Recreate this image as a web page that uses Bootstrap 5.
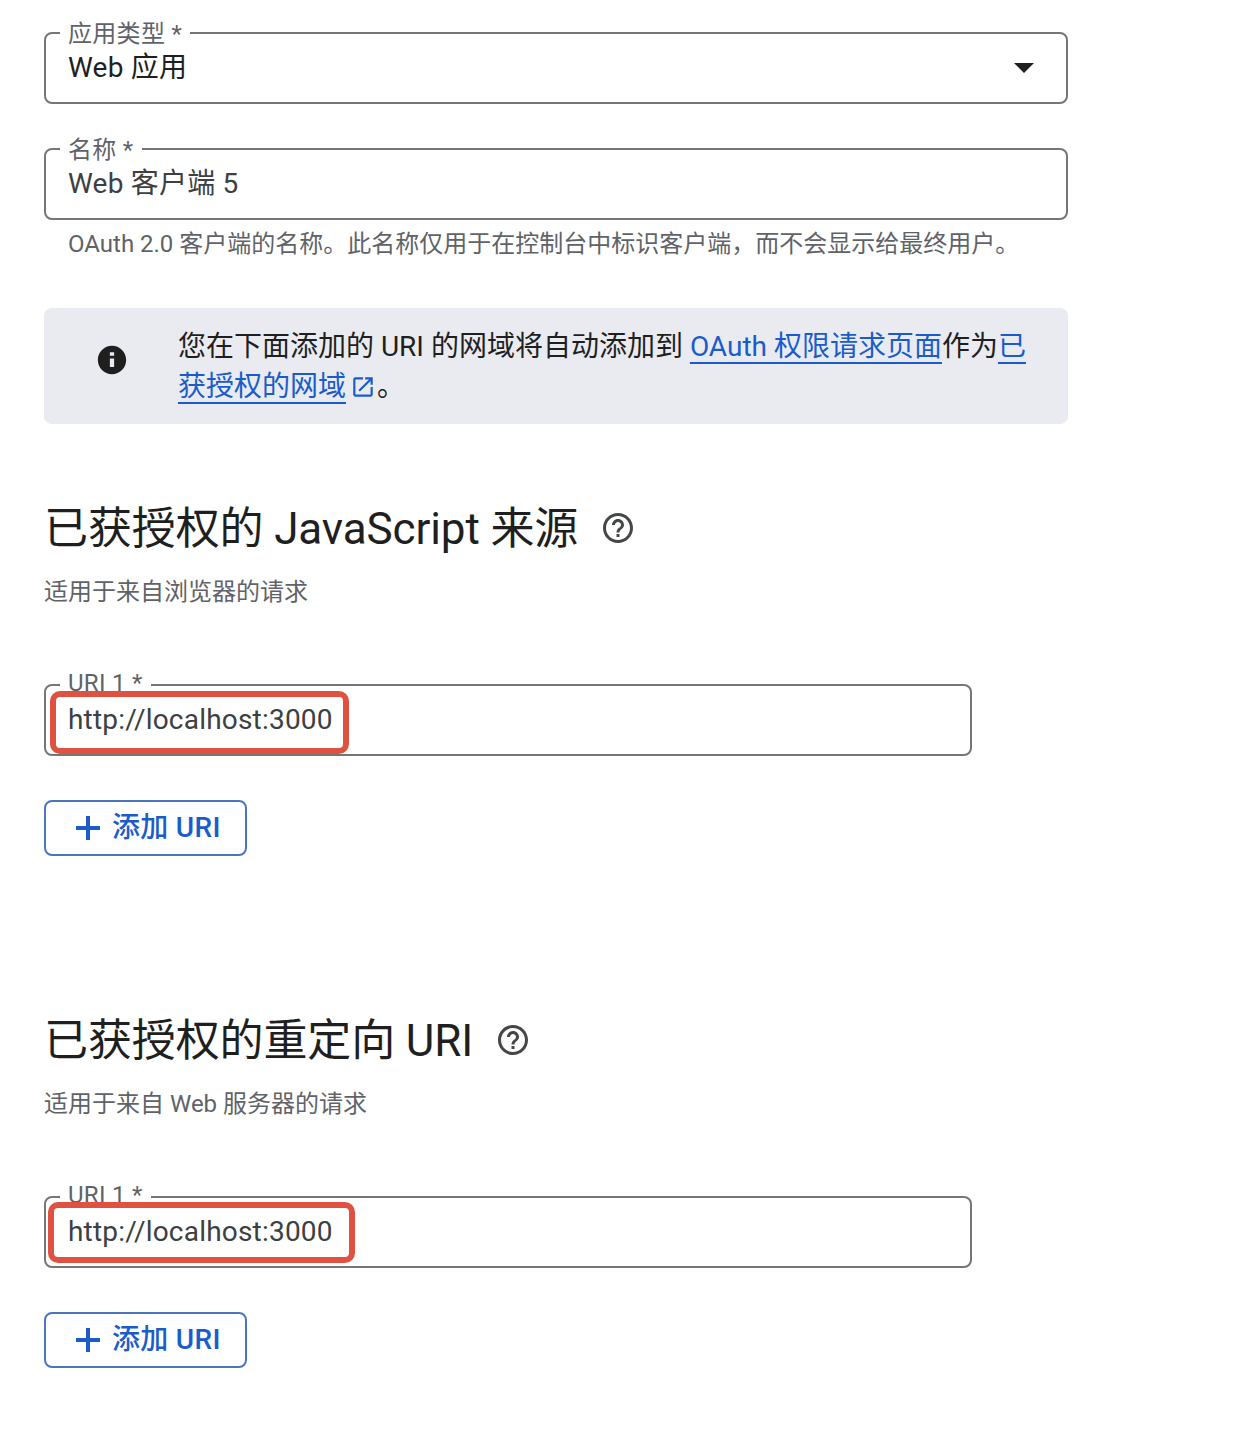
<!DOCTYPE html>
<html lang="zh-CN">
<head>
  <meta charset="UTF-8">
  <title>Web 客户端</title>
  <meta name="viewport" content="width=device-width, initial-scale=1">
  <link href="https://cdn.jsdelivr.net/npm/bootstrap@5.3.3/dist/css/bootstrap.min.css" rel="stylesheet">
  <style>
    body { font-family: Roboto, "Noto Sans CJK SC", sans-serif; color: #1f1f1f; background: #fff; }
    .page-wrap { width: 1024px; margin-left: 44px; padding-top: 32px; }
    .outline-field { position: relative; height: 72px; border: 2px solid #747775; border-radius: 8px; padding: 0 22px; font-size: 28px; line-height: 36px; letter-spacing: .2px; }
    .outline-field.short-field { width: 928px; margin-top: 76px; }
    .outline-label { position: absolute; left: 14px; top: -14px; padding: 0 8px; background: #fff; font-size: 24px; line-height: 28px; letter-spacing: .3px; color: #5f6368; }
    .short-field .outline-label { top: -17px; }
    .value-dark { color: #1f1f1f; }
    .value-soft { color: #3c4043; }
    .select-arrow { width: 0; height: 0; border-left: 10px solid transparent; border-right: 10px solid transparent; border-top: 10px solid #1f1f1f; margin-right: 10px; }
    .gap-field { margin-top: 44px; }
    .helper-text { margin: 12px 0 0 24px; font-size: 24px; line-height: 24px; color: #5f6368; white-space: nowrap; }
    .note-box { margin: 52px 0 0; height: 116px; padding: 19px 42px 17px 51px; border: 0; border-radius: 8px; background: #e9ebf1; color: #1f1f1f; font-size: 28px; line-height: 40px; }
    .note-box a { color: #1a5ccb; text-decoration: underline; text-decoration-thickness: 2px; text-underline-offset: 6px; }
    .note-text { margin-left: 49px; }
    .note-icon { flex: none; width: 34px; height: 34px; margin-top: 16px; fill: #1f1f1f; }
    .ext-icon { width: 26px; height: 26px; fill: #1a5ccb; vertical-align: -4px; margin-left: 4px; margin-right: 1px; }
    .sec-head { margin-top: 77px; }
    .sec-head.second-head { margin-top: 157px; }
    .sec-title { font-size: 44px; line-height: 56px; font-weight: 400; letter-spacing: -.12px; margin: 0; color: #1f1f1f; }
    .sec-sub { font-size: 24px; line-height: 32px; color: #5f6368; margin: 19px 0 0; }
    .help-icon { width: 36px; height: 36px; margin-top: -2px; fill: #444746; flex: none; }
    .red-mark { position: absolute; border: 6px solid #df5140; border-radius: 10px; pointer-events: none; }
    .red-one { left: 4px; top: 5px; width: 299px; height: 63px; }
    .red-two { left: 2px; top: 4px; width: 307px; height: 61px; }
    .add-btn { width: 203px; height: 56px; margin-top: 44px; padding: 0 0 0 30px; border: 2px solid #4a76c0; border-radius: 8px; color: #1a5ccb; font-size: 28px; font-weight: 500; line-height: 36px; letter-spacing: .3px; background: #fff; }
    .add-btn svg { width: 24px; height: 24px; fill: #1a5ccb; flex: none; }
    .add-gap { gap: 12px; }
    .title-gap { gap: 22px; }
  </style>
</head>
<body>
  <div class="page-wrap">
    <div class="outline-field d-flex align-items-center justify-content-between">
      <span class="outline-label">应用类型 *</span>
      <span class="value-dark">Web 应用</span>
      <span class="select-arrow"></span>
    </div>

    <div class="outline-field gap-field d-flex align-items-center">
      <span class="outline-label">名称 *</span>
      <span class="value-soft">Web 客户端 5</span>
    </div>
    <p class="helper-text">OAuth 2.0 客户端的名称。此名称仅用于在控制台中标识客户端，而不会显示给最终用户。</p>

    <div class="alert note-box d-flex align-items-start">
      <svg class="note-icon" viewBox="0 0 24 24"><path d="M12 2C6.480 2 2 6.480 2 12s4.480 10 10 10 10-4.480 10-10S17.520 2 12 2zm1.500 15h-3v-6h3v6zm0-8h-3V6.500h3V9z"/></svg>
      <div class="note-text">您在下面添加的 URI 的网域将自动添加到 <a href="#">OAuth 权限请求页面</a>作为<a href="#">已获授权的网域</a><svg class="ext-icon" viewBox="0 0 24 24"><path d="M19 19H5V5h7V3H5c-1.110 0-2 .9-2 2v14c0 1.100.89 2 2 2h14c1.100 0 2-.9 2-2v-7h-2v7zM14 3v2h3.590l-9.830 9.830 1.410 1.410L19 6.410V10h2V3h-7z"/></svg>。</div>
    </div>

    <section class="js-origins">
      <div class="sec-head d-flex align-items-center title-gap">
        <h2 class="sec-title">已获授权的 JavaScript 来源</h2>
        <svg class="help-icon" viewBox="0 0 24 24"><path d="M11 18h2v-2h-2v2zm1-16C6.480 2 2 6.480 2 12s4.480 10 10 10 10-4.480 10-10S17.520 2 12 2zm0 18c-4.410 0-8-3.590-8-8s3.590-8 8-8 8 3.590 8 8-3.590 8-8 8zm0-14c-2.210 0-4 1.790-4 4h2c0-1.100.9-2 2-2s2 .9 2 2c0 2-3 1.750-3 5h2c0-2.250 3-2.500 3-5 0-2.210-1.790-4-4-4z"/></svg>
      </div>
      <p class="sec-sub">适用于来自浏览器的请求</p>
      <div class="outline-field short-field d-flex align-items-center">
        <span class="outline-label">URI 1 *</span>
        <span class="value-soft">http://localhost:3000</span>
        <span class="red-mark red-one"></span>
      </div>
      <button type="button" class="btn add-btn d-flex align-items-center add-gap">
        <svg viewBox="0 0 24 24"><path d="M10 0h4v10h10v4H14v10h-4V14H0v-4h10z"/></svg>
        <span>添加 URI</span>
      </button>
    </section>

    <section class="redirect-uris">
      <div class="sec-head second-head d-flex align-items-center title-gap">
        <h2 class="sec-title">已获授权的重定向 URI</h2>
        <svg class="help-icon" viewBox="0 0 24 24"><path d="M11 18h2v-2h-2v2zm1-16C6.480 2 2 6.480 2 12s4.480 10 10 10 10-4.480 10-10S17.520 2 12 2zm0 18c-4.410 0-8-3.590-8-8s3.590-8 8-8 8 3.590 8 8-3.590 8-8 8zm0-14c-2.210 0-4 1.790-4 4h2c0-1.100.9-2 2-2s2 .9 2 2c0 2-3 1.750-3 5h2c0-2.250 3-2.500 3-5 0-2.210-1.790-4-4-4z"/></svg>
      </div>
      <p class="sec-sub">适用于来自 Web 服务器的请求</p>
      <div class="outline-field short-field d-flex align-items-center">
        <span class="outline-label">URI 1 *</span>
        <span class="value-soft">http://localhost:3000</span>
        <span class="red-mark red-two"></span>
      </div>
      <button type="button" class="btn add-btn d-flex align-items-center add-gap">
        <svg viewBox="0 0 24 24"><path d="M10 0h4v10h10v4H14v10h-4V14H0v-4h10z"/></svg>
        <span>添加 URI</span>
      </button>
    </section>
  </div>
  <script src="https://cdn.jsdelivr.net/npm/bootstrap@5.3.3/dist/js/bootstrap.bundle.min.js"></script>
</body>
</html>
